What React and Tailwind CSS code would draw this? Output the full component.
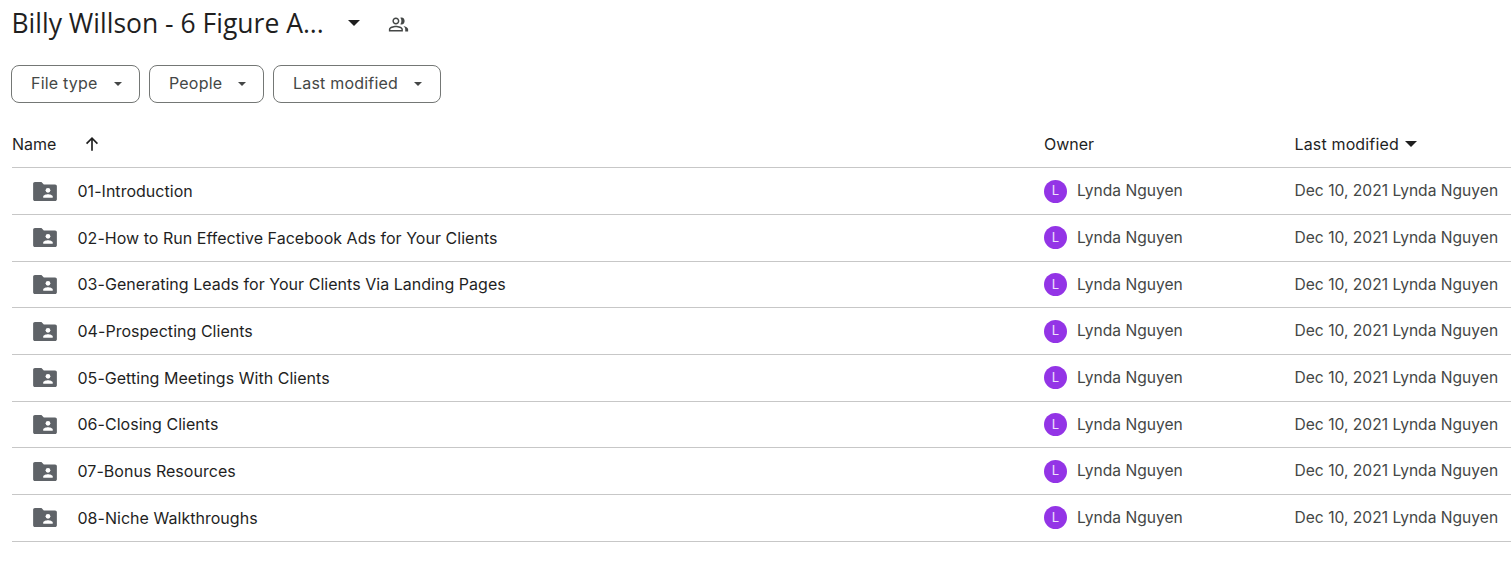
import React from 'react'

const folders = [
  '01-Introduction',
  '02-How to Run Effective Facebook Ads for Your Clients',
  '03-Generating Leads for Your Clients Via Landing Pages',
  '04-Prospecting Clients',
  '05-Getting Meetings With Clients',
  '06-Closing Clients',
  '07-Bonus Resources',
  '08-Niche Walkthroughs',
]

const Caret = ({ className }) => (
  <svg viewBox="0 0 10 5" className={className} fill="currentColor">
    <path d="M0 0l5 5 5-5z" />
  </svg>
)

const SharedFolder = () => (
  <svg viewBox="2 4 20 16" className="w-[24px] h-[19px] text-[#5f6368]" fill="currentColor">
    <path d="M2 5.500C2 4.670 2.670 4 3.500 4H9l2 2h9.500c.830 0 1.500.670 1.500 1.500v11c0 .830-.670 1.500-1.500 1.500h-17C2.670 20 2 19.330 2 18.500z" />
    <circle cx="14.500" cy="11" r="2" fill="#fff" />
    <path d="M10.500 16.300c0-1.300 2.700-2 4-2s4 .700 4 2v.900h-8z" fill="#fff" />
  </svg>
)

const PeopleIcon = () => (
  <svg viewBox="0 0 24 24" className="w-[21px] h-[21px] text-[#444746]" fill="currentColor">
    <path d="M9 12c2.200 0 4-1.800 4-4s-1.800-4-4-4-4 1.800-4 4 1.800 4 4 4zm0-6.300c1.270 0 2.300 1.030 2.300 2.300S10.270 10.300 9 10.300 6.700 9.270 6.700 8 7.730 5.700 9 5.700zM9 13.500c-2.700 0-8 1.300-8 4V20h16v-2.500c0-2.700-5.300-4-8-4zm6.300 4.800H2.700v-.8c0-1 3.600-2.300 6.300-2.300s6.300 1.300 6.300 2.300zM15.500 12c2.200 0 3.500-1.800 3.500-4s-1.300-4-3.500-4c-.5 0-1 .1-1.400.3.800 1 1.200 2.300 1.200 3.700s-.4 2.700-1.200 3.700c.4.200.9.300 1.400.3zM17.600 13.700c1.300.9 2.100 2.200 2.100 3.800V20H23v-2.500c0-2-2.700-3.300-5.400-3.800z" />
  </svg>
)

const FilterChip = ({ label, width }) => (
  <button className={`${width} h-[38px] pl-[19px] flex items-center gap-[16px] rounded-lg border border-[#747775] text-[16px] tracking-[0.2px] text-[#444746]`}>
    <span className="-mt-[2px]">{label}</span>
    <Caret className="w-[8px] h-[4px] text-[#444746]" />
  </button>
)

export default function App() {
  return (
    <div className="pl-[12px] bg-white min-h-[563px] text-[#1f1f1f] font-['Inter',sans-serif]">
      <div className="h-[46px] flex items-center">
        <h1 className="w-[325px] -ml-[0.500px] text-[26.500px] leading-[46px] whitespace-nowrap font-['Open_Sans',sans-serif]">Billy Willson - 6 Figure A...</h1>
        <Caret className="ml-[11px] w-[12px] h-[6px] text-[#1f1f1f]" />
        <div className="ml-[28px] mt-[2px] flex">
          <PeopleIcon />
        </div>
      </div>

      <div className="mt-[19px] -ml-[1px] flex gap-[9.500px]">
        <FilterChip label="File type" width="w-[128.500px]" />
        <FilterChip label="People" width="w-[114.500px]" />
        <FilterChip label="Last modified" width="w-[168px]" />
      </div>

      <div className="mt-[18px] h-[47.300px] grid grid-cols-[1032px_251px_1fr] items-center border-b border-[#c7c7c7] text-[16px]">
        <div className="flex items-center">
          <span>Name</span>
          <svg viewBox="0 0 24 24" className="ml-[26px] w-[20px] h-[20px]" fill="none" stroke="currentColor" strokeWidth="2">
            <path d="M12 20V5M5.500 11.500L12 5l6.500 6.500" />
          </svg>
        </div>
        <span>Owner</span>
        <div className="flex items-center gap-[6px] -ml-[0.500px]">
          <span className="tracking-[0.15px]">Last modified</span>
          <Caret className="w-[12px] h-[6px]" />
        </div>
      </div>

      {folders.map((name) => (
        <div key={name} className="h-[46.670px] grid grid-cols-[1032px_251px_1fr] items-center border-b border-[#c7c7c7] text-[16px]">
          <div className="flex items-center">
            <span className="ml-[21px] flex"><SharedFolder /></span>
            <span className="ml-[20.500px] text-[#1f1f1f] tracking-[0.03px]">{name}</span>
          </div>
          <div className="flex items-center text-[#444746] text-[15.600px]">
            <span className="w-[23px] h-[23px] rounded-full bg-[#9334e6] text-white/85 text-[13px] flex items-center justify-center">L</span>
            <span className="ml-[10px]">Lynda Nguyen</span>
          </div>
          <div className="-ml-[0.500px] text-[#444746] text-[15.600px] whitespace-nowrap">Dec 10, 2021 Lynda Nguyen</div>
        </div>
      ))}
    </div>
  )
}
